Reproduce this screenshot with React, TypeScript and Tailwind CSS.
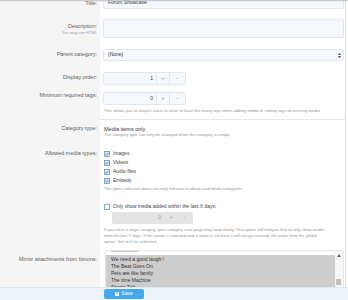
import React from "react";

const Check = ({ on }: { on: boolean }) => (
  <svg width="6" height="6" viewBox="0 0 6 6" className="shrink-0">
    <rect x="0.5" y="0.5" width="5" height="5" fill={on ? "#dbe8f5" : "#ffffff"} stroke="#6d93bd" strokeWidth="0.8" />
    {on && <path d="M1.4 3.1 L2.6 4.2 L4.6 1.7" fill="none" stroke="#3b6ea8" strokeWidth="0.8" />}
  </svg>
);

function Label({ children, pt, hint }: { children: React.ReactNode; pt: string; hint?: string }) {
  return (
    <div className={`w-[100px] shrink-0 bg-[#f5f5f5] pr-[3px] text-right ${pt}`}>
      <div className="text-[5.5px] leading-[7px] text-[#5c5c5c]">{children}</div>
      {hint && <div className="text-[4px] leading-[5px] text-[#9a9a9a]">{hint}</div>}
    </div>
  );
}

function Spin({ value, disabled }: { value: string; disabled?: boolean }) {
  return disabled ? (
    <div className="flex h-[12px] w-[81px] rounded-[2px] bg-[#e4e4e4] text-[5px] text-[#9a9a9a]">
      <div className="flex flex-1 items-center justify-end pr-[4px]">{value}</div>
      <div className="flex w-[12px] items-center justify-center text-[#9a9a9a]">+</div>
      <div className="flex w-[16px] items-center justify-center text-[#9a9a9a]">−</div>
    </div>
  ) : (
    <div className="flex h-[13px] w-[83px] rounded-[2px] border border-[#e0e7ee] bg-[#f5f9fd] text-[5px] text-[#333]">
      <div className="flex flex-1 items-center justify-end pr-[3px]">{value}</div>
      <div className="flex w-[13px] items-center justify-center border-l border-[#e0e7ee] text-[#47a7eb]">+</div>
      <div className="flex w-[16px] items-center justify-center border-l border-[#e0e7ee] text-[#47a7eb]">−</div>
    </div>
  );
}

const Explain = ({ children, cls = "" }: { children: React.ReactNode; cls?: string }) => (
  <div className={`whitespace-nowrap text-[4.2px] leading-[6px] text-[#959595] ${cls}`}>{children}</div>
);

export default function App() {
  return (
    <div
      className="relative h-[300px] w-[348px] overflow-hidden bg-white"
      style={{ fontFamily: '"Liberation Sans", Arial, sans-serif' }}
    >
      <div className="-mt-[3px] w-[346px] border-r border-[#dcdcdc]">
        {/* Title */}
        <div className="flex">
          <Label pt="pt-[3px]">Title:</Label>
          <div className="flex-1 pl-[3px] pr-[1px] pb-[5px]">
            <div className="flex h-[12px] items-center rounded-[2px] border border-[#e0e7ee] bg-[#f5f9fd] px-[4px] text-[5px] text-[#333]">
              Forum Showcase
            </div>
          </div>
        </div>
        {/* Description */}
        <div className="flex">
          <Label pt="pt-[9px]" hint="You may use HTML">Description:</Label>
          <div className="flex-1 pl-[3px] pr-[1px] pt-[5px] pb-[5px]">
            <div className="h-[19px] rounded-[2px] border border-[#e0e7ee] bg-[#f5f9fd]" />
          </div>
        </div>
        {/* Parent category */}
        <div className="flex">
          <Label pt="pt-[8px]">Parent category:</Label>
          <div className="flex-1 pl-[3px] pr-[1px] pt-[6px] pb-[5px]">
            <div className="flex h-[12px] items-center justify-between rounded-[2px] border border-[#e0e7ee] bg-[#f5f9fd] pl-[4px] pr-[2px] text-[5px] text-[#333]">
              <span>(None)</span>
              <svg width="3" height="5" viewBox="0 0 3 5">
                <path d="M1.5 0 L3 2 L0 2 Z M0 3 L3 3 L1.5 5 Z" fill="#444" />
              </svg>
            </div>
          </div>
        </div>
        {/* Display order */}
        <div className="flex">
          <Label pt="pt-[8px]">Display order:</Label>
          <div className="flex-1 pl-[3px] pt-[6px] pb-[3px]">
            <Spin value="1" />
          </div>
        </div>
        {/* Minimum required tags */}
        <div className="flex">
          <Label pt="pt-[4px]">Minimum required tags:</Label>
          <div className="flex-1 pl-[3px] pt-[4px] pb-[5px]">
            <Spin value="0" />
            <Explain cls="mt-[3px] pl-[1px]">
              This allows you to require users to enter at least this many tags when adding media or editing tags on existing media.
            </Explain>
          </div>
        </div>
        {/* Category type */}
        <div className="flex">
          <Label pt="pt-[6px]">Category type:</Label>
          <div className="flex-1 border-t border-[#e6e6e6] pl-[4px] pt-[6px] pb-[5px]">
            <div className="text-[5.5px] leading-[7px] text-[#333]">Media items only</div>
            <Explain cls="-mt-[1px]">The category type can only be changed when the category is empty.</Explain>
          </div>
        </div>
        {/* Allowed media types */}
        <div className="flex">
          <Label pt="pt-[7px]">Allowed media types:</Label>
          <div className="flex-1 pl-[4px] pt-[6px] pb-[11px]">
            {["Images", "Videos", "Audio files", "Embeds"].map((t) => (
              <div key={t} className="flex h-[9px] items-center gap-[3px] text-[5px] text-[#444]">
                <Check on />
                <span>{t}</span>
              </div>
            ))}
            <Explain cls="mt-[1px]">The types selected above are only relevant to album and media categories.</Explain>
          </div>
        </div>
        {/* Only show */}
        <div className="flex">
          <Label pt="pt-[0px]">{""}</Label>
          <div className="flex-1 pl-[4px] pb-[5px]">
            <div className="flex h-[7px] items-center gap-[3px] text-[5px] text-[#444]">
              <Check on={false} />
              <span>Only show media added within the last X days:</span>
            </div>
            <div className="mt-[2px] pl-[8px]">
              <Spin value="0" disabled />
            </div>
            <Explain cls="mt-[3px]">
              <div>If you have a large category, your category view page may load slowly. This option will mitigate that to only show media</div>
              <div>from the last X days. If the option is checked and a value is set here it will always override the value from the global</div>
              <div>option. Set to 0 for unlimited.</div>
            </Explain>
          </div>
        </div>
        {/* Mirror attachments */}
        <div className="flex">
          <Label pt="pt-[6px]">Mirror attachments from forums:</Label>
          <div className="flex-1 pl-[5px] pr-[1px]">
            <div className="flex h-[40px] rounded-[2px] border border-[#e0e7ee] bg-white">
              <div className="flex-1 overflow-hidden">
                <div className="flex h-[4px] items-start pl-[5px]">
                  <div className="h-[1px] w-[28px] bg-[#c8c8c8]" />
                </div>
                <div className="bg-[#cdcdcd] pt-[1px] pl-[5px] text-[5px] leading-[7px] text-[#333]">
                  <div>We need a good laugh !</div>
                  <div>The Beat Goes On</div>
                  <div>Pets are like family</div>
                  <div>The time Machine</div>
                  <div>Sports Talk</div>
                </div>
              </div>
              <div className="relative w-[8px] bg-[#f7f7f7]">
                <svg className="absolute left-[2px] top-[3px]" width="4" height="3" viewBox="0 0 4 3">
                  <path d="M2 0 L4 3 L0 3 Z" fill="#666" />
                </svg>
                <div className="absolute left-[1px] top-[28px] h-[6px] w-[5px] bg-[#c1c1c1]" />
              </div>
            </div>
          </div>
        </div>
      </div>

      {/* Sticky bottom bar */}
      <div className="absolute bottom-0 left-0 flex h-[13px] w-[348px] items-center border-t border-[#dde7f0] bg-[#edf3f9] pl-[104px]">
        <div className="flex h-[10px] w-[40px] items-center justify-center gap-[2px] rounded-[2px] bg-[#47a7eb] text-[5px] text-white">
          <svg width="4" height="4" viewBox="0 0 4 4">
            <rect x="0" y="0" width="4" height="4" rx="0.5" fill="#fff" />
            <rect x="1" y="0.4" width="2" height="1.2" fill="#47a7eb" />
          </svg>
          <span>Save</span>
        </div>
      </div>
      {/* top shadow */}
      <div className="pointer-events-none absolute left-0 top-0 h-[2px] w-[348px] bg-gradient-to-b from-[#bdbdbd] to-transparent" />
    </div>
  );
}
